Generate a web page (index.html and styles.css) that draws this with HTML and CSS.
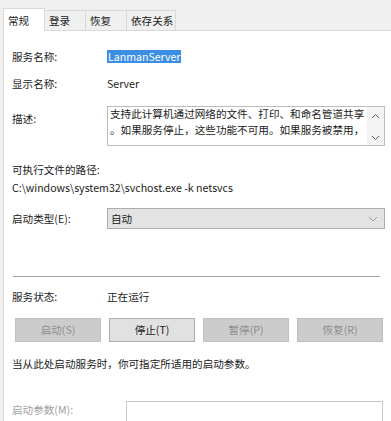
FILE: index.html
```html
<!DOCTYPE html>
<html lang="zh-CN">
<head>
  <meta charset="UTF-8">
  <title>服务属性</title>
  <link rel="stylesheet" href="styles.css">
</head>
<body>
  <div class="tabs">
    <div class="tab active">常规</div>
    <div class="tab">登录</div>
    <div class="tab">恢复</div>
    <div class="tab wide">依存关系</div>
  </div>

  <div class="panel">
    <div class="row first">
      <span class="label">服务名称:</span>
      <span class="value"><span class="selected">LanmanServer</span></span>
    </div>

    <div class="row name">
      <span class="label">显示名称:</span>
      <span class="value">Server</span>
    </div>

    <div class="row desc">
      <span class="label">描述:</span>
      <div class="textbox">
        <div class="desc-text">支持此计算机通过网络的文件、打印、和命名管道共享<br>。如果服务停止，这些功能不可用。如果服务被禁用，</div>
        <div class="scroll">
          <svg width="9" height="6" viewBox="0 0 9 6"><path d="M1 5 L4.5 1.5 L8 5" fill="none" stroke="#606060" stroke-width="1"/></svg>
          <svg width="9" height="6" viewBox="0 0 9 6"><path d="M1 1 L4.5 4.5 L8 1" fill="none" stroke="#606060" stroke-width="1"/></svg>
        </div>
      </div>
    </div>

    <div class="path-label">可执行文件的路径:</div>
    <div class="path">C:\windows\system32\svchost.exe -k netsvcs</div>

    <div class="row startup">
      <span class="label">启动类型(E):</span>
      <div class="combo">
        <span>自动</span>
        <svg width="10" height="6" viewBox="0 0 10 6"><path d="M1 1 L5 5 L9 1" fill="none" stroke="#9a9a9a" stroke-width="1"/></svg>
      </div>
    </div>

    <hr class="sep">

    <div class="row status">
      <span class="label">服务状态:</span>
      <span class="value">正在运行</span>
    </div>

    <div class="buttons">
      <button class="btn" disabled>启动(S)</button>
      <button class="btn">停止(T)</button>
      <button class="btn" disabled>暂停(P)</button>
      <button class="btn" disabled>恢复(R)</button>
    </div>

    <div class="hint">当从此处启动服务时，你可指定所适用的启动参数。</div>

    <div class="row params">
      <span class="label muted">启动参数(M):</span>
      <div class="input"></div>
    </div>
  </div>
</body>
</html>
```

FILE: styles.css
```css
html, body {
  height: 100%;
}
body {
  margin: 0;
  background: #f0f0f0;
  font-family: "Noto Sans CJK SC", sans-serif;
  font-size: 10.6px;
  color: #1a1a1a;
  line-height: 16px;
  overflow: hidden;
  display: flex;
  flex-direction: column;
}
.tabs {
  display: flex;
  align-items: flex-end;
  height: 30px;
  flex: none;
  padding-left: 3px;
}
.tab {
  box-sizing: border-box;
  width: 42px;
  height: 20px;
  padding: 2px 4px 0;
  border: 1px solid #d9d9d9;
  border-bottom: none;
  margin-right: -1px;
  background: #f0f0f0;
  white-space: nowrap;
}
.tab.wide {
  width: 50px;
}
.tab.active {
  height: 23px;
  padding-top: 4px;
  background: #fff;
  margin-bottom: -1px;
  position: relative;
  z-index: 1;
}
.panel {
  flex: 1;
  margin-left: 3px;
  background: #fff;
  border-top: 1px solid #d9d9d9;
  border-left: 1px solid #d9d9d9;
  padding: 18px 0 0 8px;
}
.row {
  display: flex;
  align-items: flex-start;
}
.label {
  width: 95px;
  flex: none;
}
.muted {
  color: #a0a0a0;
}
.selected {
  display: inline-block;
  height: 13px;
  line-height: 13px;
  padding: 0 1px;
  background: #3b8ee2;
  color: #fff;
}
.row.name {
  margin-top: 11px;
}
.row.desc {
  margin-top: 14px;
}
.row.desc .label {
  padding-top: 5px;
}
.textbox {
  flex: none;
  box-sizing: border-box;
  width: 278px;
  height: 40px;
  border: 1px solid #bcbcbc;
  display: flex;
}
.desc-text {
  flex: 1;
  padding: 0 0 0 2px;
  margin-top: -1px;
  white-space: nowrap;
  overflow: hidden;
}
.scroll {
  width: 17px;
  background: #f4f4f4;
  display: flex;
  flex-direction: column;
  justify-content: space-between;
  align-items: center;
  padding: 6px 0 4px;
}
.path-label {
  margin-top: 16px;
}
.path {
  margin-top: 2px;
}
.row.startup {
  margin-top: 12px;
  align-items: center;
}
.combo {
  box-sizing: border-box;
  width: 278px;
  height: 21px;
  border: 1px solid #adadad;
  background: #e3e3e3;
  display: flex;
  align-items: center;
  justify-content: space-between;
  padding: 0 6px 0 3px;
}
.sep {
  margin: 47px 11px 0 1px;
  border: none;
  border-top: 1px solid #a0a0a0;
  height: 0;
}
.row.status {
  margin-top: 12px;
}
.buttons {
  display: flex;
  gap: 8px;
  margin: 13px 0 0 3px;
}
.btn {
  box-sizing: border-box;
  width: 86px;
  height: 24px;
  font: inherit;
  color: #1a1a1a;
  background: #e1e1e1;
  border: 1px solid #adadad;
  padding: 0;
}
.btn:disabled {
  color: #8c8c8c;
  background: #cccccc;
  border-color: #bfbfbf;
}
.hint {
  margin-top: 14px;
}
.row.params {
  margin-top: 29px;
}
.row.params .label {
  width: 114px;
  padding-top: 1px;
}
.input {
  box-sizing: border-box;
  width: 257px;
  height: 24px;
  border: 1px solid #c8c8c8;
}
```
